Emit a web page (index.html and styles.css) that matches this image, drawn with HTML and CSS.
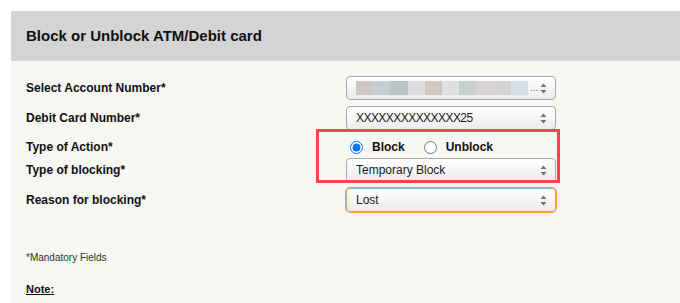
FILE: index.html
```html
<!DOCTYPE html>
<html lang="en">
<head>
    <meta charset="UTF-8">
    <meta name="viewport" content="width=device-width, initial-scale=1.0">
    <title>Block or Unblock ATM/Debit card</title>
    <link rel="stylesheet" href="styles.css">
</head>
<body>
    <div class="panel">
        <div class="panel-head">Block or Unblock ATM/Debit card</div>
        <div class="panel-body">
            <div class="form">
                <div class="row">
                    <label class="label">Select Account Number*</label>
                    <div class="select">
                        <span class="masked">
                            <i style="background:#cbc8c2"></i>
                            <i style="background:#c3ced3"></i>
                            <i style="background:#bcc2c5"></i>
                            <i style="background:#dcdddc"></i>
                            <i style="background:#cdc9c1"></i>
                            <i style="background:#e0dfdf"></i>
                            <i style="background:#c8cdcd"></i>
                            <i style="background:#d8d3d2"></i>
                            <i style="background:#d3d3d3"></i>
                            <i style="background:#d5e1e8"></i>
                        </span>
                        <span class="dots">...</span>
                        <svg class="arrows" width="7" height="11" viewBox="0 0 7 11"><path d="M3.5 0.5L6.5 4H0.5z M3.5 10.5L6.5 7H0.5z" fill="#707070"/></svg>
                    </div>
                </div>
                <div class="row">
                    <label class="label">Debit Card Number*</label>
                    <div class="select">
                        <span class="value tight">XXXXXXXXXXXXXX25</span>
                        <svg class="arrows" width="7" height="11" viewBox="0 0 7 11"><path d="M3.5 0.5L6.5 4H0.5z M3.5 10.5L6.5 7H0.5z" fill="#707070"/></svg>
                    </div>
                </div>
                <div class="row row-short">
                    <label class="label">Type of Action*</label>
                    <div class="radios">
                        <label class="radio"><input type="radio" name="action" checked> Block</label>
                        <label class="radio"><input type="radio" name="action"> Unblock</label>
                    </div>
                </div>
                <div class="row">
                    <label class="label">Type of blocking*</label>
                    <div class="select">
                        <span class="value">Temporary Block</span>
                        <svg class="arrows" width="7" height="11" viewBox="0 0 7 11"><path d="M3.5 0.5L6.5 4H0.5z M3.5 10.5L6.5 7H0.5z" fill="#707070"/></svg>
                    </div>
                </div>
                <div class="row">
                    <label class="label">Reason for blocking*</label>
                    <div class="select focused">
                        <span class="value">Lost</span>
                        <svg class="arrows" width="7" height="11" viewBox="0 0 7 11"><path d="M3.5 0.5L6.5 4H0.5z M3.5 10.5L6.5 7H0.5z" fill="#707070"/></svg>
                    </div>
                </div>
                <div class="highlight"></div>
            </div>
            <p class="mandatory">*Mandatory Fields</p>
            <p class="note">Note:</p>
        </div>
    </div>
</body>
</html>
```

FILE: styles.css
```css
body {
    margin: 0;
    padding: 11px 0 0 11px;
    background-color: #fff;
    font-family: "Liberation Sans", Arial, sans-serif;
    color: #111;
    height: 303px;
    box-sizing: border-box;
    overflow: hidden;
}

.panel {
    background-color: #f6f6f2;
    height: 100%;
}

.panel-head {
    background-color: #d4d4d4;
    height: 50px;
    line-height: 50px;
    padding-left: 15px;
    font-size: 15px;
    font-weight: bold;
}

.panel-body {
    padding: 15px 0 0 15px;
}

.form {
    position: relative;
    display: flex;
    flex-direction: column;
    gap: 6px;
}

.row {
    display: flex;
    align-items: center;
    height: 24px;
}

.row-short {
    height: 22px;
    margin-bottom: -6px;
}

.label {
    width: 320px;
    font-size: 12px;
    font-weight: bold;
}

.select {
    width: 210px;
    height: 24px;
    box-sizing: border-box;
    border: 1px solid #a9a9a9;
    border-radius: 4px;
    background: linear-gradient(#ffffff, #ebebeb);
    display: flex;
    align-items: center;
    padding: 0 8px 0 9px;
    font-size: 12px;
    color: #1a1a1a;
}

.select.focused {
    box-shadow: 0 0 0 1px #f3a13c;
}

.value {
    flex: 1;
}

.tight {
    letter-spacing: -0.55px;
}

.masked {
    display: flex;
    height: 14px;
}

.masked i {
    width: 17.2px;
    height: 14px;
}

.dots {
    flex: 1;
    font-size: 10px;
    color: #777;
    margin-left: 2px;
    line-height: 10px;
}

.arrows {
    display: block;
}

.radios {
    display: flex;
    align-items: center;
    gap: 19px;
    padding-left: 4px;
}

.radio {
    display: flex;
    align-items: center;
    gap: 9px;
    font-size: 12px;
    font-weight: bold;
}

.radio input {
    margin: 0;
    width: 13px;
    height: 13px;
    accent-color: #0075ff;
}

.highlight {
    position: absolute;
    left: 290px;
    top: 53px;
    width: 238px;
    height: 48px;
    border: 3px solid #f2464a;
}

.mandatory {
    margin: 40px 0 0;
    font-size: 10px;
    color: #333;
}

.note {
    margin: 20px 0 0;
    font-size: 11px;
    font-weight: bold;
    text-decoration: underline;
}
```
